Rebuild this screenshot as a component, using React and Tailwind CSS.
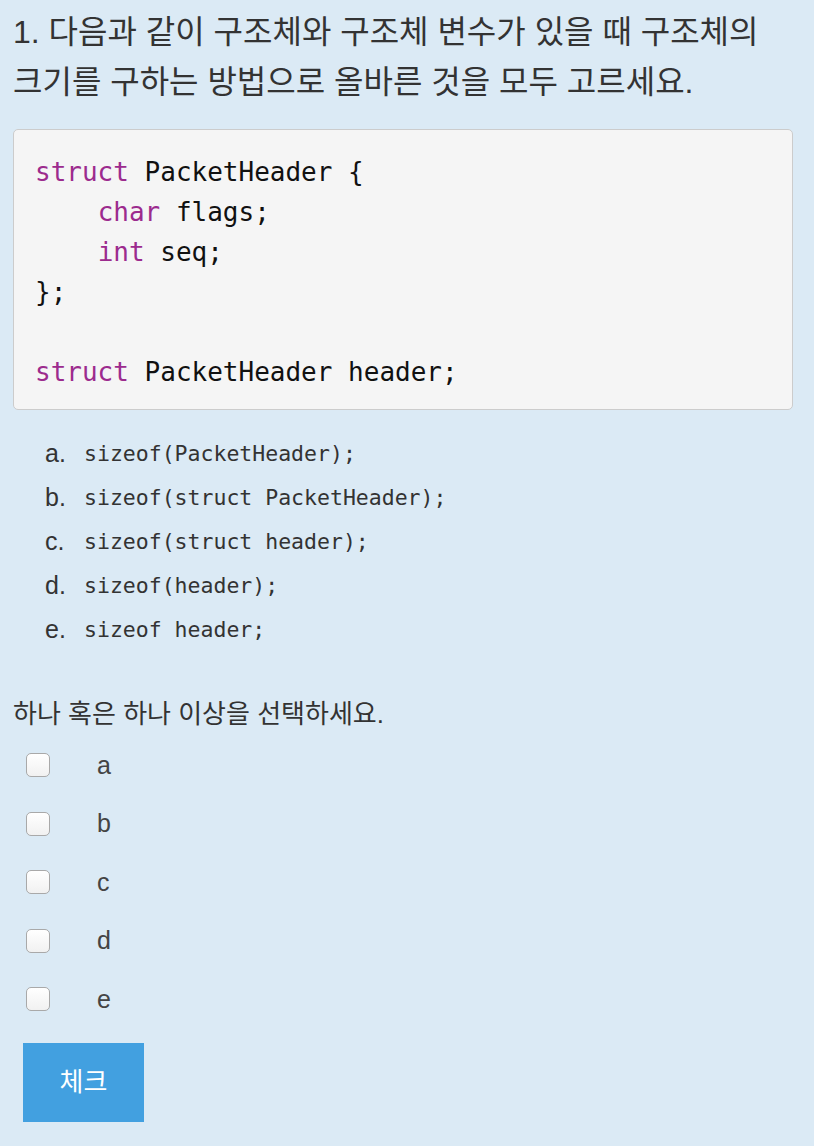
import { useState } from 'react';

const sans = '"Liberation Sans", "Noto Sans CJK KR", sans-serif';
const codeFont = '"DejaVu Sans Mono", "Liberation Mono", monospace';

const options = [
  { key: 'a', code: 'sizeof(PacketHeader);' },
  { key: 'b', code: 'sizeof(struct PacketHeader);' },
  { key: 'c', code: 'sizeof(struct header);' },
  { key: 'd', code: 'sizeof(header);' },
  { key: 'e', code: 'sizeof header;' },
];

function Kw({ children }) {
  return <span className="text-[#9c2b8e]">{children}</span>;
}

export default function App() {
  const [checked, setChecked] = useState({});

  return (
    <div className="min-h-screen bg-[#dbeaf5] text-[#333] pl-[13px] pr-[21px]" style={{ fontFamily: sans }}>
      {/* Question */}
      <h1 className="pt-[7px] text-[32px] leading-[50px] font-normal">
        1. 다음과 같이 구조체와 구조체 변수가 있을 때 구조체의 크기를 구하는 방법으로 올바른 것을 모두 고르세요.
      </h1>

      {/* Code block */}
      <pre
        className="mt-[22px] h-[281px] bg-[#f5f5f5] border border-[#cccccc] rounded-[5px] px-[21px] pt-[22px] text-[26px] leading-[40px] text-[#111]"
        style={{ fontFamily: codeFont }}
      >
        <Kw>struct</Kw> PacketHeader {'{'}
        {'\n    '}<Kw>char</Kw> flags;
        {'\n    '}<Kw>int</Kw> seq;
        {'\n};\n\n'}<Kw>struct</Kw> PacketHeader header;
      </pre>

      {/* Choices */}
      <ol className="mt-[22px]">
        {options.map((o) => (
          <li key={o.key} className="flex items-center h-[44px] pl-[32px]">
            <span className="w-[39px] text-[25px]">{o.key}.</span>
            <span className="text-[21.5px]" style={{ fontFamily: codeFont }}>{o.code}</span>
          </li>
        ))}
      </ol>

      <p className="mt-[42px] text-[26px] leading-[40px]">하나 혹은 하나 이상을 선택하세요.</p>

      <div className="mt-[2px]">
        {options.map((o) => (
          <label key={o.key} className="flex items-center h-[58.5px] pl-[13px] cursor-pointer">
            <input
              type="checkbox"
              checked={!!checked[o.key]}
              onChange={() => setChecked({ ...checked, [o.key]: !checked[o.key] })}
              className="appearance-none w-[24px] h-[24px] rounded-[5px] border border-[#a9a9a9] bg-gradient-to-b from-white to-[#f1f1f1] checked:bg-[#42a0e0]"
            />
            <span className="ml-[47px] text-[25px] text-[#444]">{o.key}</span>
          </label>
        ))}
      </div>

      <button className="mt-[14px] ml-[10px] w-[121px] h-[79px] bg-[#42a0e0] text-white text-[26px]">
        체크
      </button>
    </div>
  );
}
